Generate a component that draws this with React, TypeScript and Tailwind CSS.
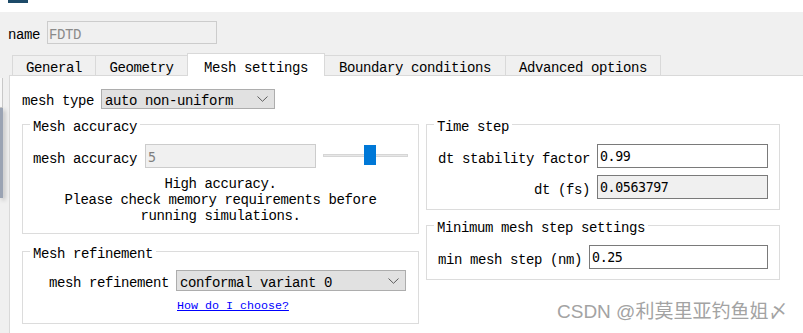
import React from "react";

const T = "font-['Liberation_Mono',monospace] text-[14px] tracking-[-0.4px] leading-[16px]";
const NUM = "font-['DejaVu_Sans_Mono',monospace] text-[13.3px] leading-[16px]";

function Chevron() {
  return (
    <svg width="11" height="6" viewBox="0 0 11 6" className="shrink-0">
      <path d="M0.5 0.5 L5.5 5.3 L10.5 0.5" stroke="#5c5c5c" strokeWidth="1" fill="none" />
    </svg>
  );
}

function Combo({ text, w, h }: { text: string; w: string; h: string }) {
  return (
    <div className={`${w} ${h} flex items-center justify-between bg-[#e1e1e1] border border-[#adadad] pl-[3px] pr-[6px]`}>
      <span className="pt-[5px]">{text}</span>
      <Chevron />
    </div>
  );
}

function Group({ title, className, children }: { title: string; className: string; children: React.ReactNode }) {
  return (
    <div className={`relative border border-[#dcdcdc] ${className}`}>
      <span className="absolute left-[7px] top-[-6px] bg-white px-[3px]">{title}</span>
      {children}
    </div>
  );
}

export default function App() {
  return (
    <div className={`w-[803px] h-[333px] bg-[#f0f0f0] relative overflow-hidden text-black ${T}`}>
      <div className="h-[12px] bg-white">
        <div className="ml-[8px] w-[20px] h-[3px] bg-[#1d4a68]" />
      </div>

      <div className="flex items-center pl-[8px] pt-[9px]">
        <span className="pt-[5px]">name</span>
        <div className="ml-[7px] w-[170px] h-[23px] bg-[#f0f0f0] border border-[#cccccc] flex items-center pl-[1px]">
          <span className="pt-[5px] text-[#8a8a8a]">FDTD</span>
        </div>
      </div>

      <div className="flex items-end pl-[12px] mt-[9px] h-[22px]">
        <div className="w-[83px] h-[20px] border-l border-t border-[#d9d9d9] bg-[#f0f0f0] flex items-center justify-center pt-[4px]">General</div>
        <div className="w-[92px] h-[20px] border-l border-t border-[#d9d9d9] bg-[#f0f0f0] flex items-center justify-center pt-[4px]">Geometry</div>
        <div className="relative z-10 -mb-px w-[138px] h-[23px] border-l border-t border-r border-[#d9d9d9] bg-white flex items-center justify-center pt-[5px]">Mesh settings</div>
        <div className="w-[181px] h-[20px] border-t border-r border-[#d9d9d9] bg-[#f0f0f0] flex items-center justify-center pt-[4px]">Boundary conditions</div>
        <div className="w-[155px] h-[20px] border-t border-r border-[#d9d9d9] bg-[#f0f0f0] flex items-center justify-center pt-[4px]">Advanced options</div>
      </div>

      <div className="ml-[9px] h-[258px] bg-white border-t border-l border-[#d9d9d9]">
        <div className="flex items-center pl-[12px] pt-[12px]">
          <span className="pt-[5px]">mesh type</span>
          <div className="ml-[7px]">
            <Combo text="auto non-uniform" w="w-[174px]" h="h-[20px]" />
          </div>
        </div>

        <div className="flex gap-[7px] pl-[12px] mt-[15px]">
          <div className="w-[397px] flex flex-col">
            <Group title="Mesh accuracy" className="h-[110px]">
              <div className="flex items-center pl-[10px] pt-[19px]">
                <span className="pt-[5px]">mesh accuracy</span>
                <div className="ml-[8px] w-[171px] h-[24px] bg-[#f0f0f0] border border-[#cccccc] flex items-center pl-[2px]">
                  <span className={`${NUM} pt-[3px] text-[#7f7f7f]`}>5</span>
                </div>
                <div className="ml-[7px] w-[85px] h-[20px] relative">
                  <div className="absolute left-0 right-0 top-[8px] h-[3px] bg-[#e7e7e7] border border-[#d6d6d6]" />
                  <div className="absolute left-[41px] top-[-1px] w-[12px] h-[20px] bg-[#0078d7]" />
                </div>
              </div>
              <div className="mt-[8px] text-center">
                <div>High accuracy.</div>
                <div>Please check memory requirements before</div>
                <div>running simulations.</div>
              </div>
            </Group>
            <Group title="Mesh refinement" className="h-[73px] mt-[17px]">
              <div className="flex items-center pl-[26px] pt-[18px]">
                <span className="pt-[5px]">mesh refinement</span>
                <div className="ml-[7px]">
                  <Combo text="conformal variant 0" w="w-[230px]" h="h-[21px]" />
                </div>
              </div>
              <div className="pl-[154px] mt-[6px]">
                <span className="font-['Liberation_Mono',monospace] text-[11.67px] leading-[16px] tracking-normal text-[#0000ff] underline">How do I choose?</span>
              </div>
            </Group>
          </div>

          <div className="w-[354px] flex flex-col">
            <Group title="Time step" className="h-[86px]">
              <div className="grid grid-cols-[152px_171px] gap-x-[7px] gap-y-[7px] items-center pl-[11px] pt-[19px]">
                <span className="text-right pt-[5px] whitespace-nowrap">dt stability factor</span>
                <div className="h-[24px] bg-white border border-[#7a7a7a] flex items-center pl-[2px]">
                  <span className={`${NUM} pt-[2px]`}>0.99</span>
                </div>
                <span className="text-right pt-[5px] whitespace-nowrap">dt (fs)</span>
                <div className="h-[24px] bg-[#f0f0f0] border border-[#7a7a7a] flex items-center pl-[2px]">
                  <span className={`${NUM} pt-[2px]`}>0.0563797</span>
                </div>
              </div>
            </Group>
            <Group title="Minimum mesh step settings" className="h-[55px] mt-[15px]">
              <div className="flex items-center pl-[11px] pt-[19px]">
                <span className="pt-[5px]">min mesh step (nm)</span>
                <div className="ml-[7px] w-[179px] h-[24px] bg-white border border-[#7a7a7a] flex items-center pl-[2px]">
                  <span className={`${NUM} pt-[2px]`}>0.25</span>
                </div>
              </div>
            </Group>
          </div>
        </div>
      </div>

      <div className="absolute left-0 top-[78px] w-[3px] h-[30px] bg-[#f7f7f7] border-r border-b border-[#c8c8c8]" />
      <div className="absolute left-0 top-[108px] w-[3px] h-[90px] bg-[#9aa3b3] shadow-[2px_2px_4px_rgba(0,0,0,0.25)]" />

      <div className="absolute left-[557px] top-[301px] font-['Liberation_Sans','Noto_Sans_CJK_SC',sans-serif] text-[19px] leading-[22px] tracking-normal text-[#a3a3a3] whitespace-nowrap">
        CSDN @利莫里亚钓鱼姐〆
      </div>
    </div>
  );
}
